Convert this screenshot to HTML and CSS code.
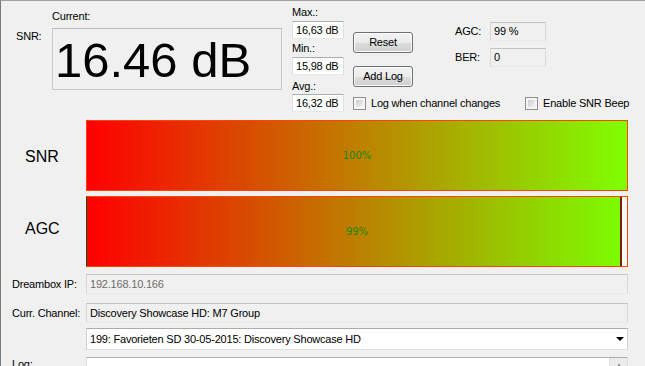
FILE: index.html
```html
<!DOCTYPE html>
<html>
<head>
<meta charset="utf-8">
<link rel="stylesheet" href="styles.css">
</head>
<body>
<div class="page">
  <div class="top">
    <div class="snr-lbl">SNR:</div>
    <div class="current">
      <div class="lbl cur-lbl">Current:</div>
      <div class="bigbox">16.46 dB</div>
    </div>
    <div class="right">
      <div class="rrow">
        <div class="stats">
          <div class="lbl max-lbl">Max.:</div>
          <div class="tb stat-tb first-tb">16,63 dB</div>
          <div class="lbl min-lbl">Min.:</div>
          <div class="tb stat-tb second-tb">15,98 dB</div>
        </div>
        <div class="buttons">
          <div class="btn reset">Reset</div>
          <div class="btn addlog">Add Log</div>
        </div>
        <div class="agc">
          <div class="kv agc-kv"><span class="kv-lbl">AGC:</span><div class="tb ro small-tb">99 %</div></div>
          <div class="kv ber-kv"><span class="kv-lbl">BER:</span><div class="tb ro small-tb">0</div></div>
        </div>
      </div>
      <div class="lbl avg-lbl">Avg.:</div>
      <div class="avgrow">
        <div class="tb stat-tb">16,32 dB</div>
        <div class="cb cb-first"><span class="box"></span><span>Log when channel changes</span></div>
        <div class="cb"><span class="box"></span><span>Enable SNR Beep</span></div>
      </div>
    </div>
  </div>

  <div class="bars">
    <div class="bar-row">
      <div class="bar-lbl snr-bl">SNR</div>
      <div class="bar">
        <div class="fill" style="width:100%"></div>
        <div class="pct">100%</div>
      </div>
    </div>
    <div class="bar-row">
      <div class="bar-lbl agc-bl">AGC</div>
      <div class="bar agc-bar">
        <div class="fill partial" style="width:99%"></div>
        <div class="pct">99%</div>
      </div>
    </div>
  </div>

  <div class="form">
    <div class="frow ip-row">
      <div class="flbl">Dreambox IP:</div>
      <div class="field tb disabled">192.168.10.166</div>
    </div>
    <div class="frow ch-row">
      <div class="flbl">Curr. Channel:</div>
      <div class="field tb ro">Discovery Showcase HD: M7 Group</div>
    </div>
    <div class="frow combo-row">
      <div class="flbl"></div>
      <div class="field combo"><span>199: Favorieten SD 30-05-2015: Discovery Showcase HD</span><span class="arrow"></span></div>
    </div>
    <div class="frow log-row">
      <div class="flbl log-lbl">Log:</div>
      <div class="field logbox"><div class="scroll"><span class="up"></span></div></div>
    </div>
  </div>
</div>
</body>
</html>
```
FILE: styles.css
```css
html, body {
  margin: 0;
  padding: 0;
  background: #f0f0f0;
}
body {
  font-family: "Liberation Sans", Arial, sans-serif;
  font-size: 11px;
  line-height: 13px;
  letter-spacing: -0.2px;
  color: #000;
}
.page {
  width: 645px;
  height: 366px;
  box-sizing: border-box;
  border-top: 1px solid #a0a0a0;
  border-left: 1px solid #7a7a7a;
  overflow: hidden;
  background: #f0f0f0;
}
.top {
  display: flex;
  height: 112px;
  padding-left: 15px;
}
.snr-lbl {
  width: 36px;
  margin-top: 29px;
}
.current {
  display: flex;
  flex-direction: column;
  width: 230px;
}
.cur-lbl {
  margin-top: 9px;
}
.bigbox {
  margin-top: 5px;
  height: 62px;
  box-sizing: border-box;
  border: 1px solid #c9c9c9;
  border-top-color: #b9b9b9;
  background: #f0f0f0;
  font-size: 49px;
  line-height: 49px;
  letter-spacing: 0;
  padding: 7px 0 0 2px;
  white-space: nowrap;
}
.right {
  margin-left: 10px;
  display: flex;
  flex-direction: column;
}
.rrow {
  display: flex;
  align-items: flex-start;
  height: 74px;
}
.stats {
  display: flex;
  flex-direction: column;
  width: 52px;
}
.max-lbl { margin-top: 5px; }
.first-tb { margin-top: 2px; }
.min-lbl { margin-top: 3px; }
.second-tb { margin-top: 2px; }
.avg-lbl { margin-top: 5px; }

.tb {
  box-sizing: border-box;
  border: 1px solid #dbdfe6;
  border-top-color: #abadb3;
  border-bottom-color: #e3e9ef;
  background: #fff;
  padding-left: 3px;
  white-space: nowrap;
  overflow: hidden;
}
.tb.ro, .tb.disabled {
  background: #f0f0f0;
  border-color: #c3c3c3 #d9d9d9 #e8e8e8 #d9d9d9;
}
.tb.disabled { color: #6d6d6d; }
.stat-tb {
  width: 52px;
  height: 18px;
  line-height: 16px;
}
.buttons {
  margin-left: 9px;
  width: 60px;
  display: flex;
  flex-direction: column;
}
.btn {
  box-sizing: border-box;
  height: 21px;
  border: 1px solid #707070;
  border-radius: 3px;
  background: linear-gradient(#f2f2f2 0%, #ebebeb 50%, #dddddd 50%, #cfcfcf 100%);
  box-shadow: inset 0 0 0 1px #fbfbfb;
  text-align: center;
  line-height: 19px;
}
.reset { margin-top: 31px; }
.addlog { margin-top: 13px; }
.agc {
  margin-left: 42px;
  display: flex;
  flex-direction: column;
}
.kv {
  display: flex;
  align-items: center;
}
.agc-kv { margin-top: 21px; }
.ber-kv { margin-top: 7px; }
.kv-lbl { width: 35px; }
.small-tb {
  width: 56px;
  height: 19px;
  line-height: 17px;
}
.avgrow {
  margin-top: 1px;
  display: flex;
  align-items: center;
}
.cb {
  display: flex;
  align-items: center;
  gap: 5px;
  margin-left: 9px;
}
.cb-first { width: 163px; }
.box {
  width: 13px;
  height: 13px;
  box-sizing: border-box;
  border: 1px solid #8e8f8f;
  padding: 2px;
  background: linear-gradient(135deg, #cbcbcb, #f4f4f4) content-box, #f4f4f4;
}

.bars {
  margin-top: 7px;
  display: flex;
  flex-direction: column;
  gap: 5px;
}
.bar-row {
  display: flex;
  align-items: center;
}
.bar-lbl {
  width: 61px;
  padding-left: 24px;
  font-size: 16px;
  line-height: 18px;
  letter-spacing: 0;
}
.snr-bl { padding-top: 2px; }
.agc-bl { padding-bottom: 6px; }
.bar {
  position: relative;
  width: 542px;
  height: 71px;
  box-sizing: border-box;
  border: 1px solid #ff4500;
  background: #f9f9f9;
  display: flex;
}
.agc-bar {
  border-left-color: #0b5d0b;
}
.fill {
  height: 100%;
  box-sizing: border-box;
  background: linear-gradient(to right, #ff0000, #7fff00);
}
.fill.partial {
  border-right: 2px solid #7a1c05;
  background: linear-gradient(to right, #ff0000, #7cfc00);
}
.pct {
  position: absolute;
  left: 0;
  right: 0;
  top: 0;
  bottom: 0;
  display: flex;
  align-items: center;
  justify-content: center;
  color: #128a12;
  font-family: "DejaVu Sans", sans-serif;
  font-size: 10px;
  letter-spacing: 0;
}

.form {
  display: flex;
  flex-direction: column;
}
.frow {
  display: flex;
  align-items: center;
}
.flbl {
  width: 74px;
  padding-left: 11px;
  white-space: nowrap;
}
.field {
  width: 542px;
  box-sizing: border-box;
}
.ip-row { margin-top: 7px; }
.ch-row { margin-top: 9px; }
.combo-row { margin-top: 5px; }
.log-row { margin-top: 7px; align-items: flex-start; }
.ip-row .field, .ch-row .field {
  height: 20px;
  line-height: 18px;
}
.combo {
  height: 22px;
  border: 1px solid #b5b5b5;
  border-color: #acacac #d0d0d0 #e0e0e0 #d0d0d0;
  background: #fff;
  padding-left: 3px;
  line-height: 20px;
  display: flex;
  justify-content: space-between;
  align-items: center;
}
.arrow {
  width: 0;
  height: 0;
  border-left: 4px solid transparent;
  border-right: 4px solid transparent;
  border-top: 4px solid #000;
  margin-right: 3px;
}
.log-lbl { margin-top: 1px; }
.logbox {
  height: 60px;
  border: 1px solid #dbdfe6;
  border-top-color: #abadb3;
  background: #fff;
  display: flex;
  justify-content: flex-end;
}
.scroll {
  width: 17px;
  height: 100%;
  background: #ebebeb;
  border-left: 1px solid #e0e0e0;
  display: flex;
  justify-content: center;
}
.up {
  margin-top: 5px;
  width: 0;
  height: 0;
  border-left: 1px solid transparent;
  border-right: 1px solid transparent;
  border-bottom: 3px solid #606060;
}
```
